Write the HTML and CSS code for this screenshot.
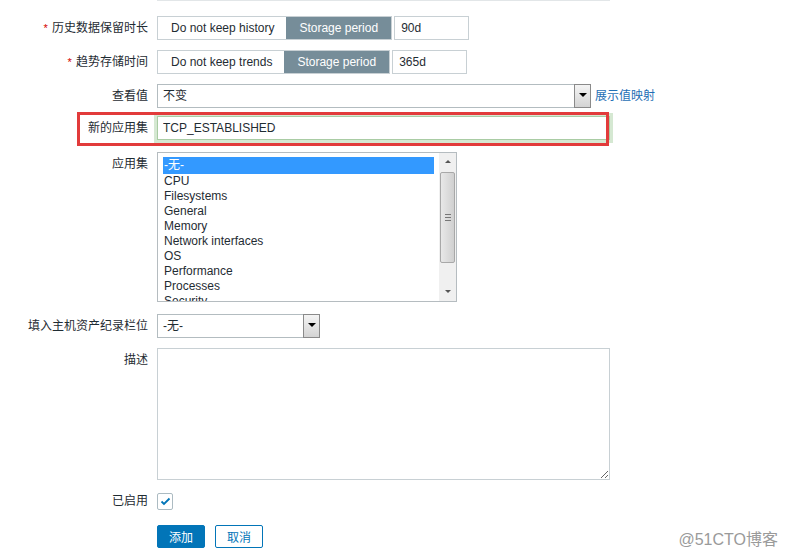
FILE: index.html
```html
<!DOCTYPE html>
<html lang="zh">
<head>
    <meta charset="UTF-8">
    <meta name="viewport" content="width=device-width, initial-scale=1.0">
    <title>监控项</title>
    <link rel="stylesheet" href="styles.css">
</head>
<body>
    <div class="form">
        <div class="prev-field"></div>

        <div class="row">
            <div class="label"><span class="req">*</span> 历史数据保留时长</div>
            <div class="field">
                <div class="segmented">
                    <span class="seg">Do not keep history</span>
                    <span class="seg seg-on">Storage period</span>
                </div>
                <input class="text text-short" type="text" value="90d">
            </div>
        </div>

        <div class="row">
            <div class="label"><span class="req">*</span> 趋势存储时间</div>
            <div class="field">
                <div class="segmented">
                    <span class="seg">Do not keep trends</span>
                    <span class="seg seg-on">Storage period</span>
                </div>
                <input class="text text-short" type="text" value="365d">
            </div>
        </div>

        <div class="row row-value">
            <div class="label">查看值</div>
            <div class="field field-link">
                <div class="select select-wide">
                    <span class="select-value">不变</span>
                    <span class="select-btn"><span class="caret"></span></span>
                </div>
                <a class="link" href="#">展示值映射</a>
            </div>
        </div>

        <div class="row row-new">
            <div class="highlight"></div>
            <div class="label">新的应用集</div>
            <div class="field">
                <input class="text text-focus" type="text" value="TCP_ESTABLISHED">
            </div>
        </div>

        <div class="row row-list">
            <div class="label">应用集</div>
            <div class="field">
                <div class="listbox">
                    <div class="options">
                        <div class="option selected">-无-</div>
                        <div class="option">CPU</div>
                        <div class="option">Filesystems</div>
                        <div class="option">General</div>
                        <div class="option">Memory</div>
                        <div class="option">Network interfaces</div>
                        <div class="option">OS</div>
                        <div class="option">Performance</div>
                        <div class="option">Processes</div>
                        <div class="option">Security</div>
                    </div>
                    <div class="scrollbar">
                        <span class="arrow arrow-up"></span>
                        <span class="thumb"><span class="grip"></span></span>
                        <span class="arrow arrow-down"></span>
                    </div>
                </div>
            </div>
        </div>

        <div class="row">
            <div class="label">填入主机资产纪录栏位</div>
            <div class="field">
                <div class="select select-narrow">
                    <span class="select-value">-无-</span>
                    <span class="select-btn"><span class="caret"></span></span>
                </div>
            </div>
        </div>

        <div class="row row-desc">
            <div class="label">描述</div>
            <div class="field">
                <textarea class="desc"></textarea>
            </div>
        </div>

        <div class="row row-check">
            <div class="label">已启用</div>
            <div class="field">
                <span class="checkbox">
                    <svg width="11" height="9" viewBox="0 0 11 9">
                        <polyline points="1.5,4.5 4,7 9.5,1.5" fill="none" stroke="#0275b8" stroke-width="1.8"/>
                    </svg>
                </span>
            </div>
        </div>

        <div class="row row-buttons">
            <div class="label"></div>
            <div class="field buttons">
                <button class="btn btn-primary">添加</button>
                <button class="btn btn-alt">取消</button>
            </div>
        </div>

        <div class="watermark">@51CTO博客</div>
    </div>
</body>
</html>
```

FILE: styles.css
```css
* {
    box-sizing: border-box;
}

body {
    margin: 0;
    background: #fff;
    color: #1f2c33;
    font-family: "Liberation Sans", Arial, "Noto Sans CJK SC", sans-serif;
    font-size: 12px;
}

.form {
    position: relative;
    height: 559px;
    overflow: hidden;
}

/* bottom edge of the field above, cut by the screenshot */
.prev-field {
    margin-left: 157px;
    width: 453px;
    height: 1px;
    background: #e2e6e8;
    margin-bottom: 15px;
}

.row {
    display: flex;
    align-items: flex-start;
    margin-bottom: 10px;
}

.label {
    flex-shrink: 0;
    width: 157px;
    padding-right: 9px;
    text-align: right;
    line-height: 24px;
    white-space: nowrap;
}

.req {
    color: #d40000;
    font-size: 11px;
    margin-right: 1px;
}

.field {
    display: flex;
    align-items: center;
    gap: 2px;
}

.segmented {
    display: flex;
    height: 24px;
    border: 1px solid #c8d0d4;
}

.seg {
    line-height: 22px;
    padding: 0 12px 0 13px;
    white-space: nowrap;
}

.seg-on {
    background: #768d99;
    color: #fff;
    padding: 0 13px;
}

.text {
    height: 24px;
    border: 1px solid #c8d0d4;
    padding: 0 6px;
    font: inherit;
    color: #1f2c33;
    outline: none;
}

.text-short {
    width: 75px;
}

.row-value {
    margin-bottom: 8px;
}

.field-link {
    gap: 4px;
}

.select {
    display: flex;
    height: 24px;
    border: 1px solid #b3bcc0;
    background: #fff;
}

.select-wide {
    width: 434px;
}

.select-narrow {
    width: 163px;
}

.select-value {
    flex: 1;
    line-height: 22px;
    padding-left: 5px;
}

.select-btn {
    width: 17px;
    margin: -1px -1px -1px 0;
    border: 1px solid #8a8a8a;
    background: linear-gradient(to bottom, #f4f4f4, #d4d4d4);
    display: flex;
    align-items: center;
    justify-content: center;
}

.caret {
    width: 0;
    height: 0;
    border-left: 4px solid transparent;
    border-right: 4px solid transparent;
    border-top: 4px solid #000;
    margin-top: -2px;
}

.link {
    color: #1f6fb5;
    text-decoration: none;
    line-height: 24px;
}

.row-new {
    position: relative;
    margin-bottom: 12px;
}

/* red annotation frame drawn over the screenshot */
.highlight {
    position: absolute;
    left: 77px;
    top: -4px;
    width: 532px;
    height: 34px;
    border: 3px solid #e23b3b;
    z-index: 2;
    pointer-events: none;
}

.text-focus {
    width: 453px;
    padding-left: 5px;
    border-color: #a9cca4;
    box-shadow: 0 0 0 3px #d5e8d2;
}

.row-list {
    margin-bottom: 12px;
}

.listbox {
    display: flex;
    width: 300px;
    height: 150px;
    border: 1px solid #b5bcc0;
}

.options {
    flex: 1;
    overflow: hidden;
    padding: 4px 5px 0 5px;
}

.option {
    line-height: 15px;
    padding-left: 1px;
    white-space: nowrap;
}

.option.selected {
    background: #3399ff;
    color: #fff;
    line-height: 17px;
}

.scrollbar {
    position: relative;
    width: 17px;
    background: #f0f0f0;
    display: flex;
    flex-direction: column;
    align-items: center;
}

.arrow {
    width: 0;
    height: 0;
    border-left: 3px solid transparent;
    border-right: 3px solid transparent;
}

.arrow-up {
    border-bottom: 3px solid #555;
    margin-top: 7px;
}

.arrow-down {
    border-top: 3px solid #555;
    margin-top: auto;
    margin-bottom: 8px;
}

.thumb {
    width: 15px;
    height: 91px;
    margin-top: 9px;
    border: 1px solid #a8a8a8;
    border-radius: 2px;
    background: linear-gradient(to right, #e8e8e8, #d0d0d0);
    display: flex;
    align-items: center;
    justify-content: center;
}

.grip {
    width: 6px;
    height: 7px;
    border-top: 1px solid #777;
    border-bottom: 1px solid #777;
    background: linear-gradient(#777, #777) center / 100% 1px no-repeat;
}

.row-desc {
    margin-bottom: 13px;
}

.desc {
    width: 453px;
    height: 132px;
    border: 1px solid #c8d0d4;
    font: inherit;
    resize: both;
    outline: none;
}

.row-check {
    margin-bottom: 15px;
}

.row-check .label {
    line-height: 17px;
}

.checkbox {
    width: 16px;
    height: 17px;
    border: 1px solid #acbbc2;
    border-radius: 2px;
    display: flex;
    align-items: center;
    justify-content: center;
}

.buttons {
    gap: 10px;
}

.btn {
    height: 23px;
    padding: 0 11px;
    border: 1px solid #0275b8;
    border-radius: 2px;
    font: inherit;
    cursor: pointer;
}

.btn-primary {
    background: #0275b8;
    color: #fff;
}

.btn-alt {
    background: #fff;
    color: #0275b8;
}

.watermark {
    position: absolute;
    right: 8px;
    bottom: 9px;
    font-size: 16px;
    color: #9a9a9a;
    text-shadow: 0 0 1px #fff;
}
```
